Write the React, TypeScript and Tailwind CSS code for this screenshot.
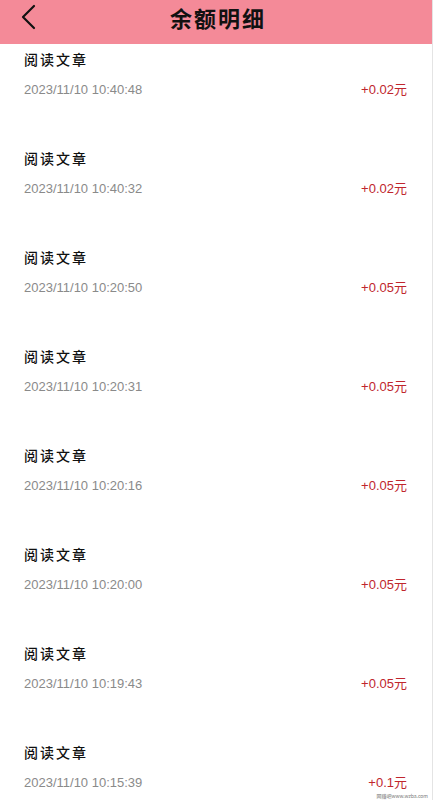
import React from 'react';

interface Record {
  title: string;
  time: string;
  amount: string;
}

const records: Record[] = [
  { title: '阅读文章', time: '2023/11/10 10:40:48', amount: '+0.02元' },
  { title: '阅读文章', time: '2023/11/10 10:40:32', amount: '+0.02元' },
  { title: '阅读文章', time: '2023/11/10 10:20:50', amount: '+0.05元' },
  { title: '阅读文章', time: '2023/11/10 10:20:31', amount: '+0.05元' },
  { title: '阅读文章', time: '2023/11/10 10:20:16', amount: '+0.05元' },
  { title: '阅读文章', time: '2023/11/10 10:20:00', amount: '+0.05元' },
  { title: '阅读文章', time: '2023/11/10 10:19:43', amount: '+0.05元' },
  { title: '阅读文章', time: '2023/11/10 10:15:39', amount: '+0.1元' },
];

export default function App() {
  return (
    <div
      className="w-[433px] h-[800px] overflow-hidden bg-white border-r border-[#e4e4e4] relative"
      style={{ fontFamily: '"Noto Sans CJK SC", "Noto Sans", sans-serif' }}
    >
      {/* Header */}
      <div className="h-[44px] bg-[#f48a98] flex items-center relative">
        <button className="absolute left-[18px] top-[4px] w-[20px] h-[26px] flex items-center justify-center">
          <svg width="18" height="26" viewBox="0 0 18 26" fill="none">
            <path d="M15 2 L4 13 L15 24" stroke="#111" strokeWidth="2.2" strokeLinecap="round" strokeLinejoin="round" />
          </svg>
        </button>
        <h1 className="w-full text-center text-[22px] font-bold text-[#111] tracking-[2px] leading-[28px] -mt-[10px] pl-[4px]">
          余额明细
        </h1>
      </div>

      {/* List */}
      <div className="flex flex-col">
        {records.map((r, i) => (
          <div key={i} className="h-[99px] pt-[5px] pl-[24px] pr-[25px] flex flex-col">
            <div className="h-[20px] leading-[20px] text-[14px] font-medium text-[#111] tracking-[2px]">{r.title}</div>
            <div className="mt-[11px] h-[20px] flex items-center justify-between">
              <span
                className="text-[13px] text-[#8a8a8a]"
                style={{ fontFamily: '"Liberation Sans", "Noto Sans CJK SC", sans-serif' }}
              >
                {r.time}
              </span>
              <span
                className="text-[13px] text-[#c0262d]"
                style={{ fontFamily: '"Liberation Sans", "Noto Sans CJK SC", sans-serif' }}
              >
                {r.amount}
              </span>
            </div>
          </div>
        ))}
      </div>

      <div className="absolute right-[4px] bottom-[2px] text-[5px] text-[#777] leading-none">
        网赚吧www.wzba.com
      </div>
    </div>
  );
}
